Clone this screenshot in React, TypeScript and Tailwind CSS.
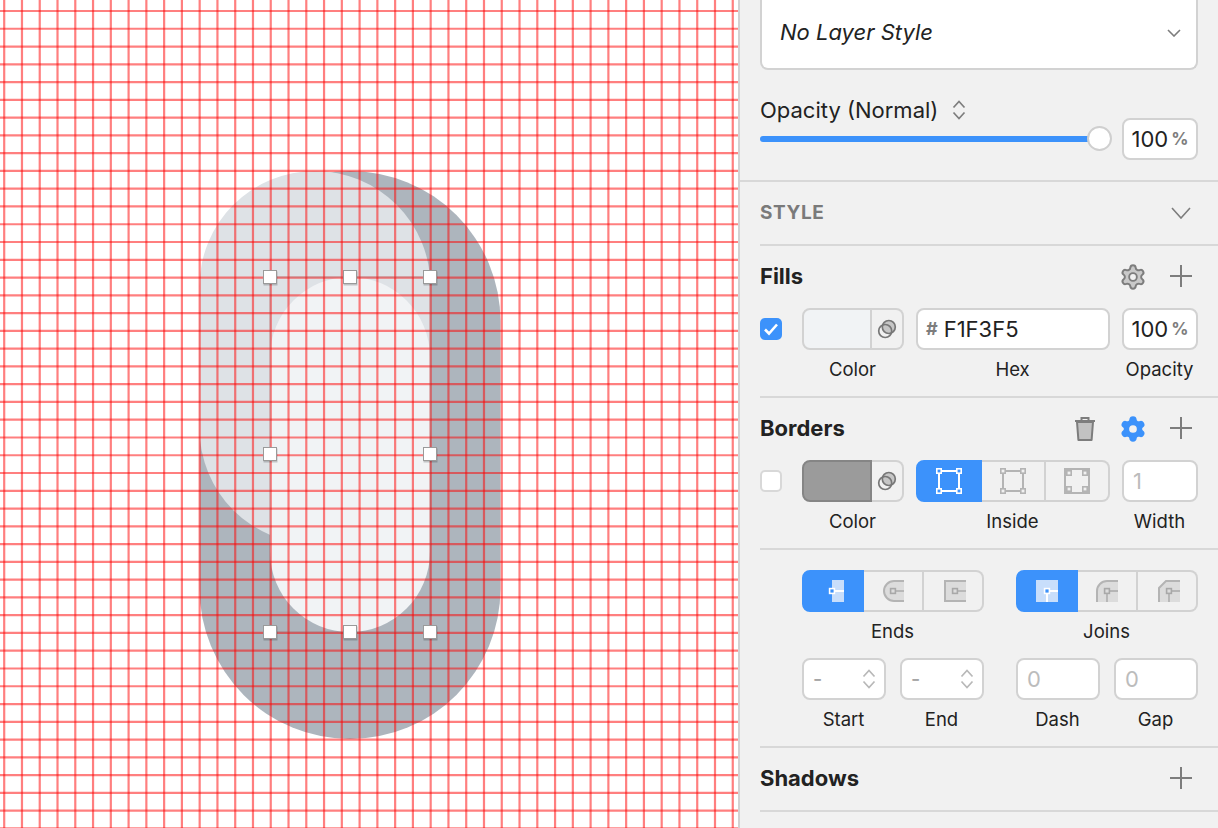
import type { ReactNode } from 'react';

const GEAR =
  'M9.671 4.136a2.34 2.34 0 0 1 4.659 0 2.34 2.34 0 0 0 3.319 1.915 2.34 2.34 0 0 1 2.33 4.033 2.34 2.34 0 0 0 0 3.831 2.34 2.34 0 0 1-2.33 4.033 2.34 2.34 0 0 0-3.319 1.915 2.34 2.34 0 0 1-4.659 0 2.34 2.34 0 0 0-3.32-1.915 2.34 2.34 0 0 1-2.33-4.033 2.34 2.34 0 0 0 0-3.831A2.34 2.34 0 0 1 6.35 6.051a2.34 2.34 0 0 0 3.319-1.915';

const GRID_X = Array.from({ length: 42 }, (_, i) => 4.2 + i * 17.77);
const GRID_Y = Array.from({ length: 47 }, (_, i) => 11 + i * 17.77);
const HANDLES = [
  [270, 277], [350, 277], [430, 277],
  [270, 454], [430, 454],
  [270, 632], [350, 632], [430, 632],
];

// ---- Canvas ----
function Canvas() {
  return (
    <svg width={738} height={828} viewBox="0 0 738 828" className="block shrink-0 bg-white">
      <rect x={199.5} y={171} width={301} height={568} rx={150.5} fill="#adb5bd" />
      <rect x={199.5} y={171} width={231} height={373} rx={115.5} fill="#dee2e6" />
      <rect x={270} y={277} width={160} height={355} rx={80} fill="#f1f3f5" />
      <g stroke="#ff0000" strokeOpacity={0.5} strokeWidth={2.2}>
        {GRID_X.map((x) => <line key={x} x1={x} y1={0} x2={x} y2={828} />)}
        {GRID_Y.map((y) => <line key={y} x1={0} y1={y} x2={738} y2={y} />)}
      </g>
      <rect x={270} y={277} width={160} height={355} fill="none" stroke="#777" strokeOpacity={0.35} />
      {HANDLES.map(([x, y]) => (
        <g key={`${x}-${y}`}>
          <rect x={x - 6.5} y={y - 5.5} width={14} height={14} fill="#000" fillOpacity={0.2} />
          <rect x={x - 6.5} y={y - 6.5} width={13} height={13} fill="#fff" stroke="#9a9a9a" />
        </g>
      ))}
    </svg>
  );
}

// ---- Small icons ----
function Chevron({ w = 14, h = 8, color = '#7d7d7d' }: { w?: number; h?: number; color?: string }) {
  return (
    <svg width={w} height={h} viewBox={`0 0 ${w} ${h}`}>
      <path d={`M1 1 L${w / 2} ${h - 1} L${w - 1} 1`} fill="none" stroke={color} strokeWidth={1.6} />
    </svg>
  );
}

function UpDown({ color = '#7d7d7d' }: { color?: string }) {
  return (
    <svg width={14} height={22} viewBox="0 0 14 22">
      <path d="M1.5 8.5 L7 2.5 L12.5 8.5 M1.5 13.5 L7 19.5 L12.5 13.5" fill="none" stroke={color} strokeWidth={1.7} />
    </svg>
  );
}

function Plus() {
  return (
    <svg width={24} height={24} viewBox="0 0 24 24">
      <path d="M12 1 V23 M1 12 H23" stroke="#7d7d7d" strokeWidth={2} />
    </svg>
  );
}

function Gear({ blue }: { blue?: boolean }) {
  return (
    <svg width={28} height={28} viewBox="0 0 24 24" className="mt-[2px]">
      <path d={GEAR} fill={blue ? '#3c92fb' : '#c9c9c9'} stroke={blue ? '#3c92fb' : '#7d7d7d'} strokeWidth={1.7} />
      <circle cx={12} cy={12} r={3.3} fill="#f1f1f1" stroke={blue ? 'none' : '#7d7d7d'} strokeWidth={1.6} />
    </svg>
  );
}

function Trash() {
  return (
    <svg width={22} height={26} viewBox="0 0 22 26" className="mt-[2px]">
      <path d="M3 6 H19 L17.6 24 H4.4 Z" fill="#c2c2c2" stroke="#7d7d7d" strokeWidth={2} strokeLinejoin="round" />
      <path d="M1 5 H21 M7.5 4.5 V2 H14.5 V4.5" fill="none" stroke="#7d7d7d" strokeWidth={2} />
    </svg>
  );
}

function Overlap() {
  return (
    <svg width={20} height={20} viewBox="0 0 20 20">
      <circle cx={11.8} cy={8} r={6.5} fill="#c6c6c6" stroke="#777" strokeWidth={1.7} />
      <circle cx={8.2} cy={12} r={6.5} fill="none" stroke="#777" strokeWidth={1.7} />
    </svg>
  );
}

function BorderIcon({ kind, color }: { kind: 'center' | 'inside' | 'outside'; color: string }) {
  const outside = kind === 'outside';
  const pts = outside ? [5, 21] : [3, 23];
  return (
    <svg width={26} height={26} viewBox="0 0 26 26">
      <rect x={outside ? 1 : 3} y={outside ? 1 : 3} width={outside ? 24 : 20} height={outside ? 24 : 20} fill="none" stroke={color} strokeWidth={2} />
      {pts.flatMap((x) => pts.map((y) => (
        <rect key={`${x}-${y}`} x={x - 2.2} y={y - 2.2} width={4.4} height={4.4}
          fill={kind === 'center' ? '#3c92fb' : '#f1f1f1'} stroke={color} strokeWidth={1.6} />
      )))}
    </svg>
  );
}

function Knob({ x = 11, active }: { x?: number; active?: boolean }) {
  return (
    <rect x={x - 2.4} y={8.6} width={4.8} height={4.8} fill={active ? '#3c92fb' : '#dcdcdc'} stroke={active ? '#fff' : '#a8a8a8'} strokeWidth={1.6} />
  );
}

function EndIcon({ kind, className }: { kind: 'butt' | 'round' | 'square'; className?: string }) {
  if (kind === 'butt') {
    return (
      <svg width={22} height={22} viewBox="0 0 22 22">
        <rect x={10} y={0} width={12} height={22} fill="#c8defb" />
        <path d="M9 11 H22" stroke="#fff" strokeWidth={2} />
        <Knob x={10} active />
      </svg>
    );
  }
  const d = kind === 'round' ? 'M22 1 H12 A10 10 0 0 0 12 21 H22' : 'M22 1 H1 V21 H22';
  return (
    <svg width={22} height={22} viewBox="0 0 22 22" className={className}>
      <path d={d} fill="#dcdcdc" stroke="#b4b4b4" strokeWidth={2} />
      <path d="M11 11 H22" stroke="#a8a8a8" strokeWidth={1.4} />
      <Knob />
    </svg>
  );
}

function JoinIcon({ kind, className }: { kind: 'miter' | 'round' | 'bevel'; className?: string }) {
  if (kind === 'miter') {
    return (
      <svg width={22} height={22} viewBox="0 0 22 22">
        <rect width={22} height={22} fill="#c8defb" />
        <path d="M11 11 H22 M11 11 V22" stroke="#fff" strokeWidth={2} />
        <Knob active />
      </svg>
    );
  }
  const d = kind === 'round' ? 'M1 22 V11 A10 10 0 0 1 11 1 H22' : 'M1 22 V8 L8 1 H22';
  return (
    <svg width={22} height={22} viewBox="0 0 22 22" className={className}>
      <path d={`${d} V22 Z`} fill="#dcdcdc" />
      <path d={d} fill="none" stroke="#b4b4b4" strokeWidth={2} />
      <path d="M11 11 H22 M11 11 V22" stroke="#a8a8a8" strokeWidth={1.4} />
      <Knob />
    </svg>
  );
}

// ---- Panel parts ----
function Field({ label, className, children }: { label: string; className: string; children: ReactNode }) {
  return (
    <div className={`flex shrink-0 flex-col items-center ${className}`}>
      {children}
      <span className="mt-2 pr-px text-[18.5px] leading-[23px] text-[#222]">{label}</span>
    </div>
  );
}

function Box({ className = '', children }: { className?: string; children?: ReactNode }) {
  return (
    <div className={`flex h-[42px] w-full items-center overflow-hidden rounded-[8px] border-2 border-[#d2d2d2] ${className}`}>
      {children}
    </div>
  );
}

function Percent() {
  return (
    <Box className="justify-center bg-white">
      <span className="text-[22px] leading-none text-[#222]">100</span>
      <span className="ml-[3px] mt-[1px] text-[17px] font-bold leading-none text-[#7d7d7d]">%</span>
    </Box>
  );
}

function Well({ fill }: { fill: string }) {
  return (
    <div className="flex h-[42px] w-full">
      <div className={`h-full w-[70px] rounded-l-[8px] border-2 ${fill}`} />
      <div className="flex flex-1 items-center justify-center rounded-r-[8px] border-y-2 border-r-2 border-[#d2d2d2] bg-[#f1f1f1]"><Overlap /></div>
    </div>
  );
}

function Segment({ first, last, className, children }: { first?: boolean; last?: boolean; className: string; children: ReactNode }) {
  const look = first
    ? 'rounded-l-[8px] border-2 border-[#3c92fb] bg-[#3c92fb]'
    : `border-y-2 border-r-2 border-[#d2d2d2] ${last ? 'rounded-r-[8px]' : ''}`;
  return <div className={`flex h-full items-center justify-center ${className} ${look}`}>{children}</div>;
}

function SegmentBox({ children }: { children: ReactNode }) {
  return <div className="flex h-[42px] w-full bg-[#f1f1f1]">{children}</div>;
}

function Header({ title, children }: { title: string; children?: ReactNode }) {
  return (
    <div className="flex h-8 items-center justify-between">
      <h3 className="text-[22px] font-bold leading-8 text-[#222]">{title}</h3>
      <div className="flex items-center">{children}</div>
    </div>
  );
}

function Stepper() {
  return (
    <Box className="justify-between bg-white pl-[9px] pr-[8px]">
      <span className="text-[20px] font-medium leading-none text-[#a6a6a6]">-</span>
      <UpDown color="#b8b8b8" />
    </Box>
  );
}

function Disabled({ value }: { value: string }) {
  return (
    <Box className="bg-white pl-[9px]">
      <span className="text-[22px] leading-none text-[#bcbcbc]">{value}</span>
    </Box>
  );
}

function Inspector() {
  return (
    <div className="h-full w-[480px] shrink-0 border-l-2 border-[#d2d2d2] bg-[#f1f1f1]">
      <div className="px-5">
        <div className="flex h-[70px] items-center justify-between rounded-b-[8px] border-2 border-t-0 border-[#d2d2d2] bg-white pb-1 pl-[18px] pr-[15px]">
          <span className="text-[22px] italic text-[#222]">No Layer Style</span>
          <div className="mt-[2px] flex"><Chevron /></div>
        </div>
      </div>

      <div className="border-b-2 border-[#d8d8d8] px-5 pb-5 pt-7">
        <div className="flex items-start justify-between">
          <div className="w-[352px]">
            <div className="flex h-6 items-center gap-[14px]">
              <span className="text-[22px] leading-6 text-[#222]">Opacity (Normal)</span>
              <UpDown />
            </div>
            <div className="mt-[4px] flex h-[25px] items-center">
              <div className="h-[6px] flex-1 rounded-full bg-[#3c92fb]" />
              <div className="-ml-[3px] h-[25px] w-[25px] rounded-full border-2 border-[#cfcfcf] bg-white" />
            </div>
          </div>
          <div className="mt-5 w-[76px]"><Percent /></div>
        </div>
      </div>

      <div className="ml-5 flex h-[64px] items-center justify-between border-b-2 border-[#d8d8d8] pr-[27px]">
        <span className="text-[19px] font-bold tracking-[0.6px] text-[#7a7a7a]">STYLE</span>
        <Chevron w={20} h={12} />
      </div>

      <section className="ml-5 border-b-2 border-[#d8d8d8] pb-[15px] pr-5 pt-[14px]">
        <Header title="Fills">
          <Gear />
          <div className="ml-[22px] mr-[5px]"><Plus /></div>
        </Header>
        <div className="mt-4 flex items-start">
          <div className="mt-[10px] flex h-[22px] w-[22px] shrink-0 items-center justify-center rounded-[5px] bg-[#3c92fb]">
            <svg width={16} height={14} viewBox="0 0 16 14">
              <path d="M2 7.5 L6 11.5 L14 2.5" fill="none" stroke="#fff" strokeWidth={2.6} />
            </svg>
          </div>
          <Field label="Color" className="ml-5 w-[102px]"><Well fill="border-[#d2d2d2] bg-[#f1f3f5]" /></Field>
          <Field label="Hex" className="ml-3 w-[194px]">
            <Box className="bg-white pl-[8px]">
              <span className="text-[18px] font-bold leading-none text-[#7d7d7d]">#</span>
              <span className="ml-[6px] text-[22px] leading-none text-[#222]">F1F3F5</span>
            </Box>
          </Field>
          <Field label="Opacity" className="ml-3 w-[76px]"><Percent /></Field>
        </div>
      </section>

      <section className="ml-5 border-b-2 border-[#d8d8d8] pb-[15px] pr-5 pt-[14px]">
        <Header title="Borders">
          <Trash />
          <div className="ml-[23px]"><Gear blue /></div>
          <div className="ml-[22px] mr-[5px]"><Plus /></div>
        </Header>
        <div className="mt-4 flex items-start">
          <div className="mt-[10px] h-[22px] w-[22px] shrink-0 rounded-[5px] border-2 border-[#d8d8d8] bg-white" />
          <Field label="Color" className="ml-5 w-[102px]"><Well fill="border-[#858585] bg-[#9b9b9b]" /></Field>
          <Field label="Inside" className="ml-3 w-[194px]">
            <SegmentBox>
              <Segment first className="w-[66px]"><BorderIcon kind="center" color="#fff" /></Segment>
              <Segment className="w-[64px]"><BorderIcon kind="inside" color="#b4b4b4" /></Segment>
              <Segment last className="flex-1"><BorderIcon kind="outside" color="#b4b4b4" /></Segment>
            </SegmentBox>
          </Field>
          <Field label="Width" className="ml-3 w-[76px]"><Disabled value="1" /></Field>
        </div>
      </section>

      <section className="ml-5 border-b-2 border-[#d8d8d8] pb-[15px] pl-[42px] pr-5 pt-5">
        <div className="flex items-start">
          <Field label="Ends" className="w-[182px]">
            <SegmentBox>
              <Segment first className="w-[62px]"><EndIcon kind="butt" /></Segment>
              <Segment className="w-[60px]"><EndIcon kind="round" /></Segment>
              <Segment last className="flex-1"><EndIcon kind="square" className="ml-[4px]" /></Segment>
            </SegmentBox>
          </Field>
          <Field label="Joins" className="ml-8 w-[182px]">
            <SegmentBox>
              <Segment first className="w-[62px]"><JoinIcon kind="miter" /></Segment>
              <Segment className="w-[60px]"><JoinIcon kind="round" /></Segment>
              <Segment last className="flex-1"><JoinIcon kind="bevel" className="ml-[4px]" /></Segment>
            </SegmentBox>
          </Field>
        </div>
        <div className="mt-[15px] flex items-start">
          <Field label="Start" className="w-[84px]"><Stepper /></Field>
          <Field label="End" className="ml-[14px] w-[84px]"><Stepper /></Field>
          <Field label="Dash" className="ml-8 w-[84px]"><Disabled value="0" /></Field>
          <Field label="Gap" className="ml-[14px] w-[84px]"><Disabled value="0" /></Field>
        </div>
      </section>

      <section className="ml-5 border-b-2 border-[#d8d8d8] pb-4 pr-5 pt-[14px]">
        <Header title="Shadows">
          <div className="mr-[5px]"><Plus /></div>
        </Header>
      </section>
    </div>
  );
}

export default function App() {
  return (
    <div className="flex h-[828px] w-[1218px] overflow-hidden bg-white font-['Inter',sans-serif]">
      <Canvas />
      <Inspector />
    </div>
  );
}
